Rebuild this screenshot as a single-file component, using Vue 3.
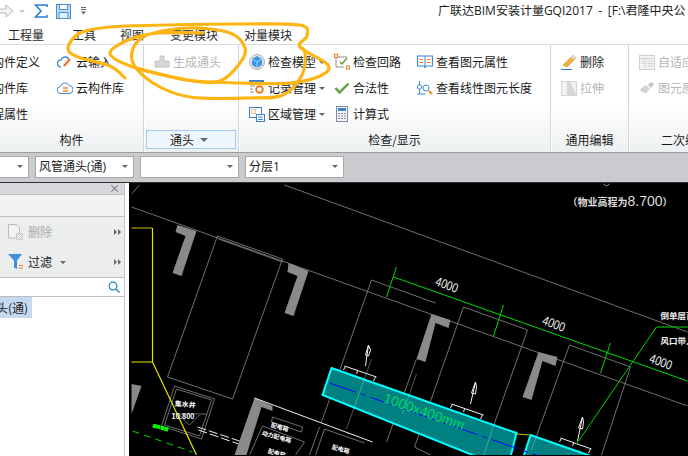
<template>
  <div class="app">
    <div class="quickbar">
      <svg class="qa-icon" width="16" height="16" viewBox="0 0 16 16"><path d="M0 6h7V2l7 6-7 6v-4H0z" fill="#f4f4f4" stroke="#b9b9b9" /></svg>
      <span class="caret light"></span>
      <svg class="qa-sigma" width="14" height="16" viewBox="0 0 14 16"><path d="M13 4V2H1.500L7 8 1.500 14H13v-2" fill="none" stroke="#2c7fd0" stroke-width="1.600" /></svg>
      <svg class="qa-save" width="15" height="15" viewBox="0 0 15 15"><rect x=".5" y=".5" width="14" height="14" fill="#bcdcf6" stroke="#4a90d9" /><rect x="3.500" y=".5" width="8" height="5" fill="#fff" stroke="#4a90d9" /><rect x="3" y="8.500" width="9" height="6" fill="#e4f1fb" stroke="#4a90d9" /></svg>
      <svg class="qa-more" width="7" height="8" viewBox="0 0 7 8"><path d="M1 .5h5M1 2.500h5" stroke="#666" /><path d="M1 4.500h5L3.500 7.500z" fill="#666" /></svg>
      <span class="title">广联达BIM安装计量GQI2017 - [F:\君隆中央公</span>
    </div>

    <div class="tabs">
      <span v-for="t in tabs" :key="t">{{ t }}</span>
    </div>

    <div class="ribbon">
      <section class="group g1">
        <div class="group-body">
          <div class="col col-cut">
            <div class="item">构件定义</div>
            <div class="item">构件库</div>
            <div class="item">程属性</div>
          </div>
          <div class="col">
            <div class="item">
              <svg width="16" height="14" viewBox="0 0 16 14"><path d="M4 12a3.500 3.500 0 0 1 0-7 4.500 4.500 0 0 1 8-1" fill="none" stroke="#3f8ad6" stroke-width="1.300" /><path d="M7 11l6-7" stroke="#f0762b" stroke-width="2.400" /></svg>
              云输入
            </div>
            <div class="item">
              <svg width="16" height="14" viewBox="0 0 16 14"><path d="M4 12.500a3.500 3.500 0 0 1-.5-7 4.500 4.500 0 0 1 8.500-1 3.800 3.800 0 0 1 0 8z" fill="#fff" stroke="#3f8ad6" /><path d="M6 7h5M6 10h5" stroke="#f0862b" stroke-width="1.500" /></svg>
              云构件库
            </div>
          </div>
        </div>
        <div class="group-label">构件</div>
      </section>

      <section class="group g2">
        <div class="group-body">
          <div class="col">
            <div class="item off">
              <svg width="16" height="14" viewBox="0 0 16 14"><path d="M6 1h4v5h5v6H1V6h5z" fill="#d6d6d6" stroke="#c2c2c2" /></svg>
              生成通头
            </div>
          </div>
        </div>
        <div class="group-btn"><span>通头</span><span class="caret big"></span></div>
      </section>

      <section class="group g3">
        <div class="group-body">
          <div class="col">
            <div class="item">
              <svg width="16" height="16" viewBox="0 0 16 16"><circle cx="8" cy="8" r="7.500" fill="#e3e3e3" stroke="#b5b5b5" /><path d="M8 2l5 3v6l-5 3-5-3V5z" fill="#3c97e8" /><path d="M3 5l5 3 5-3M8 8v6" fill="none" stroke="#a9d6fb" /></svg>
              检查模型<span class="caret"></span>
            </div>
            <div class="item">
              <svg width="16" height="16" viewBox="0 0 16 16"><rect y="0" width="15" height="3.500" fill="#3f7fcf" /><path d="M1 6h5M1 9h3M1 12h4" stroke="#8a8a8a" /><circle cx="10.500" cy="9.500" r="3.300" fill="#fff" stroke="#ee7a22" stroke-width="2" /></svg>
              记录管理<span class="caret"></span>
            </div>
            <div class="item">
              <svg width="16" height="15" viewBox="0 0 16 15"><rect x=".5" y=".5" width="12" height="10" fill="#fff" stroke="#3f7fcf" /><rect x="2.500" y="2.500" width="4" height="4" fill="none" stroke="#ee7a22" stroke-dasharray="1 1" /><rect x="7.500" y="7.500" width="8" height="7" fill="#fff" stroke="#3f7fcf" /><path d="M9 10h5M9 12.500h5" stroke="#3f7fcf" /></svg>
              区域管理<span class="caret"></span>
            </div>
          </div>
          <div class="col">
            <div class="item">
              <svg width="16" height="16" viewBox="0 0 16 16"><path d="M3 3h10M2 4v9h8" fill="none" stroke="#8c8c8c" /><path d="M6 8l2 2 5-6" fill="none" stroke="#5b9a3c" stroke-width="1.300" /><rect x=".5" y=".5" width="3" height="3" fill="#fff" stroke="#ee7a22" /><rect x="12.500" y="12" width="3" height="3" fill="#fff" stroke="#ee7a22" /></svg>
              检查回路
            </div>
            <div class="item">
              <svg width="16" height="14" viewBox="0 0 16 14"><path d="M1.500 7l4 4.500 9-9" fill="none" stroke="#5f9e3e" stroke-width="2.400" /></svg>
              合法性
            </div>
            <div class="item">
              <svg width="16" height="16" viewBox="0 0 16 16"><rect x="2.500" y=".5" width="11" height="15" fill="#f2f5f8" stroke="#7d8d9e" /><rect x="4" y="2" width="8" height="3" fill="#3f7fcf" /><path d="M4 7.500h8M4 10h8M4 12.500h8" stroke="#7d8d9e" stroke-dasharray="2 1" /></svg>
              计算式
            </div>
          </div>
          <div class="col col-wide">
            <div class="item">
              <svg width="16" height="14" viewBox="0 0 16 14"><path d="M.5 1h15v10H9l-1 1.500L7 11H.5z" fill="#fff" stroke="#3c86d4" stroke-width="1.200" /><path d="M8 1v10" stroke="#3c86d4" /><path d="M2.500 4.500h3.500M2.500 7.500h3.500M10 4.500h3.500M10 7.500h3.500" stroke="#ee7a22" /></svg>
              查看图元属性
            </div>
            <div class="item">
              <svg width="16" height="16" viewBox="0 0 16 16"><path d="M2.500 1v13M.5 14h8" stroke="#3c86d4" /><circle cx="2.500" cy="7" r="2.200" fill="#fff" stroke="#3c86d4" /><circle cx="9" cy="8" r="3" fill="#fff" stroke="#3c86d4" /><path d="M12 11l3 3" stroke="#f0962b" stroke-width="2.400" /></svg>
              查看线性图元长度
            </div>
          </div>
        </div>
        <div class="group-label">检查/显示</div>
      </section>

      <section class="group g4">
        <div class="group-body">
          <div class="col">
            <div class="item">
              <svg width="16" height="16" viewBox="0 0 16 16"><path d="M2 11L12 1.500l3 2.500-9 9z" fill="#f0b040" stroke="#c98a1f" stroke-width=".6" /><path d="M12 1.500l3 2.500-2 2-3-2.500z" fill="#d9d9d9" /><path d="M0 15.500h11" stroke="#2f7fd4" /></svg>
              删除
            </div>
            <div class="item off">
              <svg width="16" height="16" viewBox="0 0 16 16"><rect x=".5" y="1.500" width="15" height="14" fill="#f2f2f2" stroke="#d4d4d4" /><path d="M6 15V2l3-.5 6.500 14z" fill="#d6d6d6" /></svg>
              拉伸
            </div>
          </div>
        </div>
        <div class="group-label">通用编辑</div>
      </section>

      <section class="group g5">
        <div class="group-body">
          <div class="col">
            <div class="item off">
              <svg width="16" height="15" viewBox="0 0 16 15"><rect x=".5" y=".5" width="15" height="14" fill="#f4f4f4" stroke="#d0d0d0" /><path d="M1 3.500h14M6 4v10M8 6h6M8 8.500h6M8 11h6M2.500 6h2M2.500 8.500h2" stroke="#cfcfcf" /></svg>
              自适应
            </div>
            <div class="item off">
              <svg width="16" height="14" viewBox="0 0 16 14"><path d="M1 8l6-4 4 4-5 5-1-2-1 1-1-2-1 .5z" fill="#d3d3d3" /><path d="M9 4l3-3 3 2-3 4z" fill="#c4c4c4" /></svg>
              图元原位
            </div>
          </div>
        </div>
        <div class="group-label">二次编辑</div>
      </section>
    </div>

    <div class="toolbar">
      <div v-for="(s, i) in selects" :key="i" class="select" :class="{ cut: i === 0 }">
        <span>{{ s }}</span><span class="caret"></span>
      </div>
    </div>

    <div class="main">
      <aside class="panel">
        <div class="panel-head">×</div>
        <div class="panel-row"></div>
        <div class="panel-tools">
          <div class="tool off">
            <svg width="16" height="16" viewBox="0 0 16 16"><path d="M.5.500h8l3 3V14H.5z" fill="#f4f4f4" stroke="#bcbcbc" /><rect x="8" y="9" width="7" height="7" fill="#d0d0d0" /><path d="M9.500 10.500l4 4M13.500 10.500l-4 4" stroke="#fff" /></svg>
            <span>删除</span>
            <svg class="more" width="7" height="6" viewBox="0 0 7 6"><path d="M0 0l3 3-3 3zM4 0l3 3-3 3z" fill="#666" /></svg>
          </div>
          <div class="tool">
            <svg width="16" height="16" viewBox="0 0 16 16"><path d="M0 0h14L9 6.500V15l-3-1.500v-7z" fill="#3f8fe0" /><path d="M11 11.500h4M11 14h4" stroke="#ee7a22" /></svg>
            <span>过滤</span><span class="caret"></span>
            <svg class="more" width="7" height="6" viewBox="0 0 7 6"><path d="M0 0l3 3-3 3zM4 0l3 3-3 3z" fill="#666" /></svg>
          </div>
        </div>
        <div class="panel-search">
          <svg width="12" height="12" viewBox="0 0 12 12"><circle cx="5" cy="5" r="3.800" fill="none" stroke="#2f86c4" stroke-width="1.300" /><path d="M8 8l3.500 3.500" stroke="#2f86c4" stroke-width="1.500" /></svg>
        </div>
        <div class="panel-list"><div class="list-sel"><span>风管通头(通)</span></div></div>
      </aside>

      <div class="canvas">
        <svg class="cad" width="559" height="272" viewBox="130 184 558 272">
          <path d="M604 185l3 2 3-2" fill="none" stroke="#999" />
          <g fill="none" stroke="#8a8a8a" stroke-width=".8">
            <path d="M132 195l8-9M285 186L688 333M132 208L688 407" />
            <path d="M218 237l65 23-50 140-65-22zM219 240l64 23" />
            <path d="M372 281l64 23M372 281l-50 142M417 360l-30 83" />
            <path d="M464 308l64 23-34 96M464 308l-49 140 16 8" />
            <path d="M570 346l61 22-29 88M570 346l-33 91" />
            <path d="M175 387l40 13-13 40-40-13zM177 390l35 11-12 36-35-11z" />
            <path d="M172 415l35 0M180 416l10 10 10-10" />
            <path d="M273 418l30 10-1 5-30-10zM263 427l42 16-9 13M263 427l-13 29" />
            <path d="M320 428l-10 28M325 430l40 14M325 430l-9 26" />
          </g>
          <g fill="#8a8a8a">
            <path d="M178 226l19 6-15 45-9-3 13-37-10-4z" />
            <path d="M289 264l20 8-15 45-9-3 13-37-10-4z" />
            <path d="M432 315l19 6-2 8-13-5-10 39-9-3z" />
            <path d="M539 353l19 5-2 9-13-5-11 39-9-3z" />
            <path d="M132 385l10 2-10 28z" />
            <path d="M255 399l18 8v5l-11-4-15 48h-12z" />
          </g>

          <path d="M332 369l185 65-9 36-185-74z" fill="#008080" stroke="#00ffff" stroke-width="2" />
          <path d="M531 436l69 24-10 30-70-20z" fill="#008080" stroke="#00ffff" stroke-width="2" />
          <path d="M330 384l235 82" stroke="#0000ff" stroke-dasharray="28 5 5 5" />
          <path d="M517 435l13 1" stroke="#c8c800" />
          <path d="M372 360l-25 70M417 375l-14 40M494 427l-10 30M537 437l-5 14" stroke="#9adada" stroke-width=".6" opacity=".7" />
          <text class="t-duct" transform="translate(383 403) rotate(19.500)">1000x400mm</text>

          <g fill="none" stroke="#f2f2f2">
            <path d="M345 367l32 11M346 367l-2 4M376 378l-2 4M358 372l-1 3" />
            <path d="M452 405l32 11M453 405l-2 4M483 416l-2 4M465 410l-1 3" />
            <path d="M561 439l31 11M562 439l-2 4M591 450l-2 4M574 444l-1 3" />
            <path d="M369 346l-3 21M369 346l-3 10 3 1 2-6z" />
            <path d="M476 383l-5 22M476 383l-4 11 4 1 1-7z" />
            <path d="M583 418l-5 24M583 418l-4 11 4 1 1-7z" />
            <path d="M198 428l42 14M199 431l40 14" stroke-dasharray="9 3" />
            <path d="M255 399l118 44" />
          </g>

          <g fill="none" stroke="#00d800">
            <path d="M394 278l294 104M397 268l-10 30M504 306l-10 31M611 344l-10 30" />
            <path d="M688 328h-31l-80 117" />
            <path d="M133 432l60 21" stroke-dasharray="7 5" />
          </g>
          <path d="M132 229h21" stroke="#8c8c00" stroke-width="1.400" />
          <path d="M153 229v134H132M153 363l44 93" fill="none" stroke="#e8e800" stroke-width="1.200" />

          <text class="t-dim" transform="translate(435 286) rotate(20) scale(.8 1)">4000</text>
          <text class="t-dim" transform="translate(542 325) rotate(20) scale(.8 1)">4000</text>
          <text class="t-dim" transform="translate(649 363) rotate(20) scale(.8 1)">4000</text>
          <text class="t-top" x="568" y="207">（物业高程为<tspan class="t-top-num">8.700</tspan>）</text>
          <text class="t-small" x="661" y="320">倒单层百</text>
          <text class="t-small" x="661" y="345">风口带人</text>
          <text class="t-tiny" transform="translate(175 407) rotate(5)">集水井</text>
          <text class="t-tiny" x="172" y="420">10.800</text>
          <text class="t-green" transform="translate(153 428) rotate(15)">回风管道</text>
          <text class="t-room" transform="translate(271 428) rotate(15)">配电箱</text>
          <text class="t-room" transform="translate(262 436) rotate(15)">动力配电箱</text>
          <text class="t-room" transform="translate(268 454) rotate(15)">配电箱</text>
          <text class="t-room" transform="translate(332 450) rotate(15)">配电箱</text>
        </svg>
      </div>
    </div>

    <svg class="scribble" width="688" height="456" viewBox="0 0 688 456">
      <path v-for="(d, i) in scribbles" :key="i" :d="d" />
    </svg>
  </div>
</template>

<script setup>
const tabs = ['工程量', '工具', '视图', '变更模块', '对量模块']
const selects = ['', '风管通头(通)', '', '分层1']

// smooth line through hand-read points of the marker strokes
function smooth(pts) {
  let d = `M${pts[0][0]} ${pts[0][1]}`
  for (let i = 0; i < pts.length - 1; i++) {
    const p0 = pts[i - 1] || pts[i]
    const p1 = pts[i]
    const p2 = pts[i + 1]
    const p3 = pts[i + 2] || p2
    const c1 = [p1[0] + (p2[0] - p0[0]) / 6, p1[1] + (p2[1] - p0[1]) / 6]
    const c2 = [p2[0] - (p3[0] - p1[0]) / 6, p2[1] - (p3[1] - p1[1]) / 6]
    d += `C${c1[0]} ${c1[1]} ${c2[0]} ${c2[1]} ${p2[0]} ${p2[1]}`
  }
  return d
}

const scribbles = [
  [[125, 78], [110, 66], [78, 57], [68, 48], [80, 33], [110, 27], [167, 25], [240, 24], [300, 25], [307, 36], [300, 47], [328, 65], [320, 76], [290, 83], [240, 83], [187, 80], [133, 67]],
  [[203, 33], [160, 33], [133, 38], [110, 53], [133, 67], [187, 80], [220, 81], [240, 63], [245, 48], [230, 33], [187, 28], [143, 37], [132, 60], [153, 83], [190, 97], [250, 98], [283, 95], [302, 75], [305, 53], [300, 47]],
].map(smooth)
</script>

<style>
html, body {
  margin: 0;
  background: #fff;
}
</style>

<style scoped>
.app {
  position: relative;
  width: 688px;
  height: 456px;
  overflow: hidden;
  display: flex;
  flex-direction: column;
  background: #fff;
  color: #1a1a1a;
  font: 12px/1 "Noto Sans CJK SC", "Liberation Sans", sans-serif;
}

.quickbar {
  height: 22px;
  flex: none;
  display: flex;
  align-items: center;
  white-space: nowrap;
}
.qa-icon { margin-left: -1px; }
.quickbar .caret { margin-left: 4px; }
.caret.light { border-top-color: #c4c4c4; }
.qa-sigma { margin-left: 9px; }
.qa-save { margin-left: 8px; }
.qa-more { margin-left: 9px; }
.title {
  margin-left: auto;
  width: 250px;
  overflow: hidden;
  word-spacing: 2.500px;
  font-family: "Open Sans", "Noto Sans CJK SC", sans-serif;
}

.tabs {
  height: 23px;
  flex: none;
  box-sizing: border-box;
  display: flex;
  align-items: center;
  gap: 26px;
  padding: 3px 0 0 8px;
  border-bottom: 1px solid #dcdcdc;
  color: #2a2a2a;
}
.tabs span:nth-child(1) { margin-right: 2px; }
.tabs span:nth-child(2) { margin-right: -2px; }

.ribbon {
  height: 107px;
  flex: none;
  display: flex;
  background: linear-gradient(#fff 55%, #edf0f1);
}
.group {
  display: flex;
  flex-direction: column;
  flex: none;
  box-sizing: border-box;
  border-right: 1px solid #d2d5d6;
  box-shadow: 1px 0 0 #fff;
}
.g1 { width: 144px; }
.g2 { width: 95px; }
.g3 { width: 312px; }
.g4 { width: 78px; }
.g5 { width: 112px; border-right: 0; }
.group-body {
  flex: 1;
  display: flex;
  padding: 4px 0 0 10px;
}
.g1 .group-body { gap: 17px; padding-left: 0; }
.g3 .group-body { gap: 9px; }
.col { display: flex; flex-direction: column; }
.col-cut { margin-left: -8px; width: 48px; }
.col-wide { margin-left: 7px; }
.item {
  height: 26px;
  display: flex;
  align-items: center;
  gap: 3px;
  white-space: nowrap;
}
.item svg { width: 16px; flex: none; }
.item.off { color: #b5b5b5; }
.group-label {
  height: 25px;
  display: flex;
  align-items: center;
  justify-content: center;
}
.group-btn {
  height: 19px;
  box-sizing: border-box;
  margin: 0 2px 3px;
  padding-right: 4px;
  display: flex;
  align-items: center;
  justify-content: center;
  gap: 6px;
  background: #eef6fd;
  border: 1px solid #a3cbef;
}

.caret {
  display: inline-block;
  width: 0;
  height: 0;
  border-left: 3px solid transparent;
  border-right: 3px solid transparent;
  border-top: 3px solid #666;
}
.caret.big {
  border-left-width: 4px;
  border-right-width: 4px;
  border-top-width: 4px;
}

.toolbar {
  height: 30px;
  flex: none;
  box-sizing: border-box;
  display: flex;
  align-items: center;
  gap: 6px;
  padding-bottom: 2px;
  background: #c9cbce;
  border-top: 1px solid #9c9c9c;
}
.select {
  width: 99px;
  height: 22px;
  flex: none;
  box-sizing: border-box;
  display: flex;
  align-items: center;
  justify-content: space-between;
  padding: 0 5px 0 3px;
  background: #fff;
  border: 1px solid #a8a8a8;
  font-family: "Open Sans", "Noto Sans CJK SC", sans-serif;
}
.select.cut { margin-left: -70px; }

.main {
  flex: 1;
  min-height: 0;
  display: flex;
  border-top: 1px solid #333;
}
.panel {
  width: 125px;
  flex: none;
  display: flex;
  flex-direction: column;
  background: #fff;
  border-right: 1px solid #c4c6c9;
  box-sizing: border-box;
}
.panel-head {
  height: 11px;
  padding-right: 4px;
  text-align: right;
  line-height: 11px;
  font-size: 11px;
  color: #666;
  background: #d6d8db;
  border-bottom: 1px solid #bfc1c4;
}
.panel-row {
  height: 21px;
  background: #f2f2f2;
  border-bottom: 1px solid #bcbec1;
}
.panel-tools {
  height: 60px;
  background: #eceded;
  border-bottom: 1px solid #bcbec1;
  display: flex;
  flex-direction: column;
  justify-content: center;
  gap: 8px;
}
.tool {
  height: 22px;
  display: flex;
  align-items: center;
  gap: 4px;
  padding-left: 8px;
  position: relative;
}
.tool.off { color: #aaa; }
.tool .caret { margin-left: 4px; }
.more {
  position: absolute;
  right: 3px;
  top: 8px;
}
.panel-search {
  height: 18px;
  display: flex;
  align-items: center;
  justify-content: flex-end;
  padding-right: 4px;
  border-bottom: 1px solid #bcbec1;
}
.panel-list { flex: 1; }
.list-sel {
  width: 32px;
  height: 21px;
  display: flex;
  align-items: center;
  background: #c5d9f1;
  white-space: nowrap;
}
.list-sel span { margin-left: -40px; }

.canvas {
  flex: 1;
  min-width: 0;
  margin-left: 4px;
  background: #000;
  overflow: hidden;
}
.cad { display: block; }

.t-dim { font-size: 13px; font-family: "Liberation Sans", sans-serif; fill: #eee; }
.t-top { font-size: 10px; fill: #ddd; font-weight: 700; }
.t-top-num { font-size: 14px; font-weight: 400; font-family: "Liberation Sans", sans-serif; }
.t-small { font-size: 8.500px; fill: #eee; font-weight: 700; }
.t-tiny { font-size: 7px; fill: #fff; font-weight: 700; }
.t-room { font-size: 6px; fill: #fff; font-weight: 700; }
.t-green { font-size: 4px; fill: #00ff00; stroke: #00ff00; stroke-width: .5; }
.t-duct { font-size: 14px; fill: #00d868; font-family: "Liberation Sans", sans-serif; }

.scribble {
  position: absolute;
  left: 0;
  top: 0;
  pointer-events: none;
}
.scribble path {
  fill: none;
  stroke: #fdb515;
  stroke-width: 3.200;
  stroke-linecap: round;
  stroke-linejoin: round;
}
</style>
